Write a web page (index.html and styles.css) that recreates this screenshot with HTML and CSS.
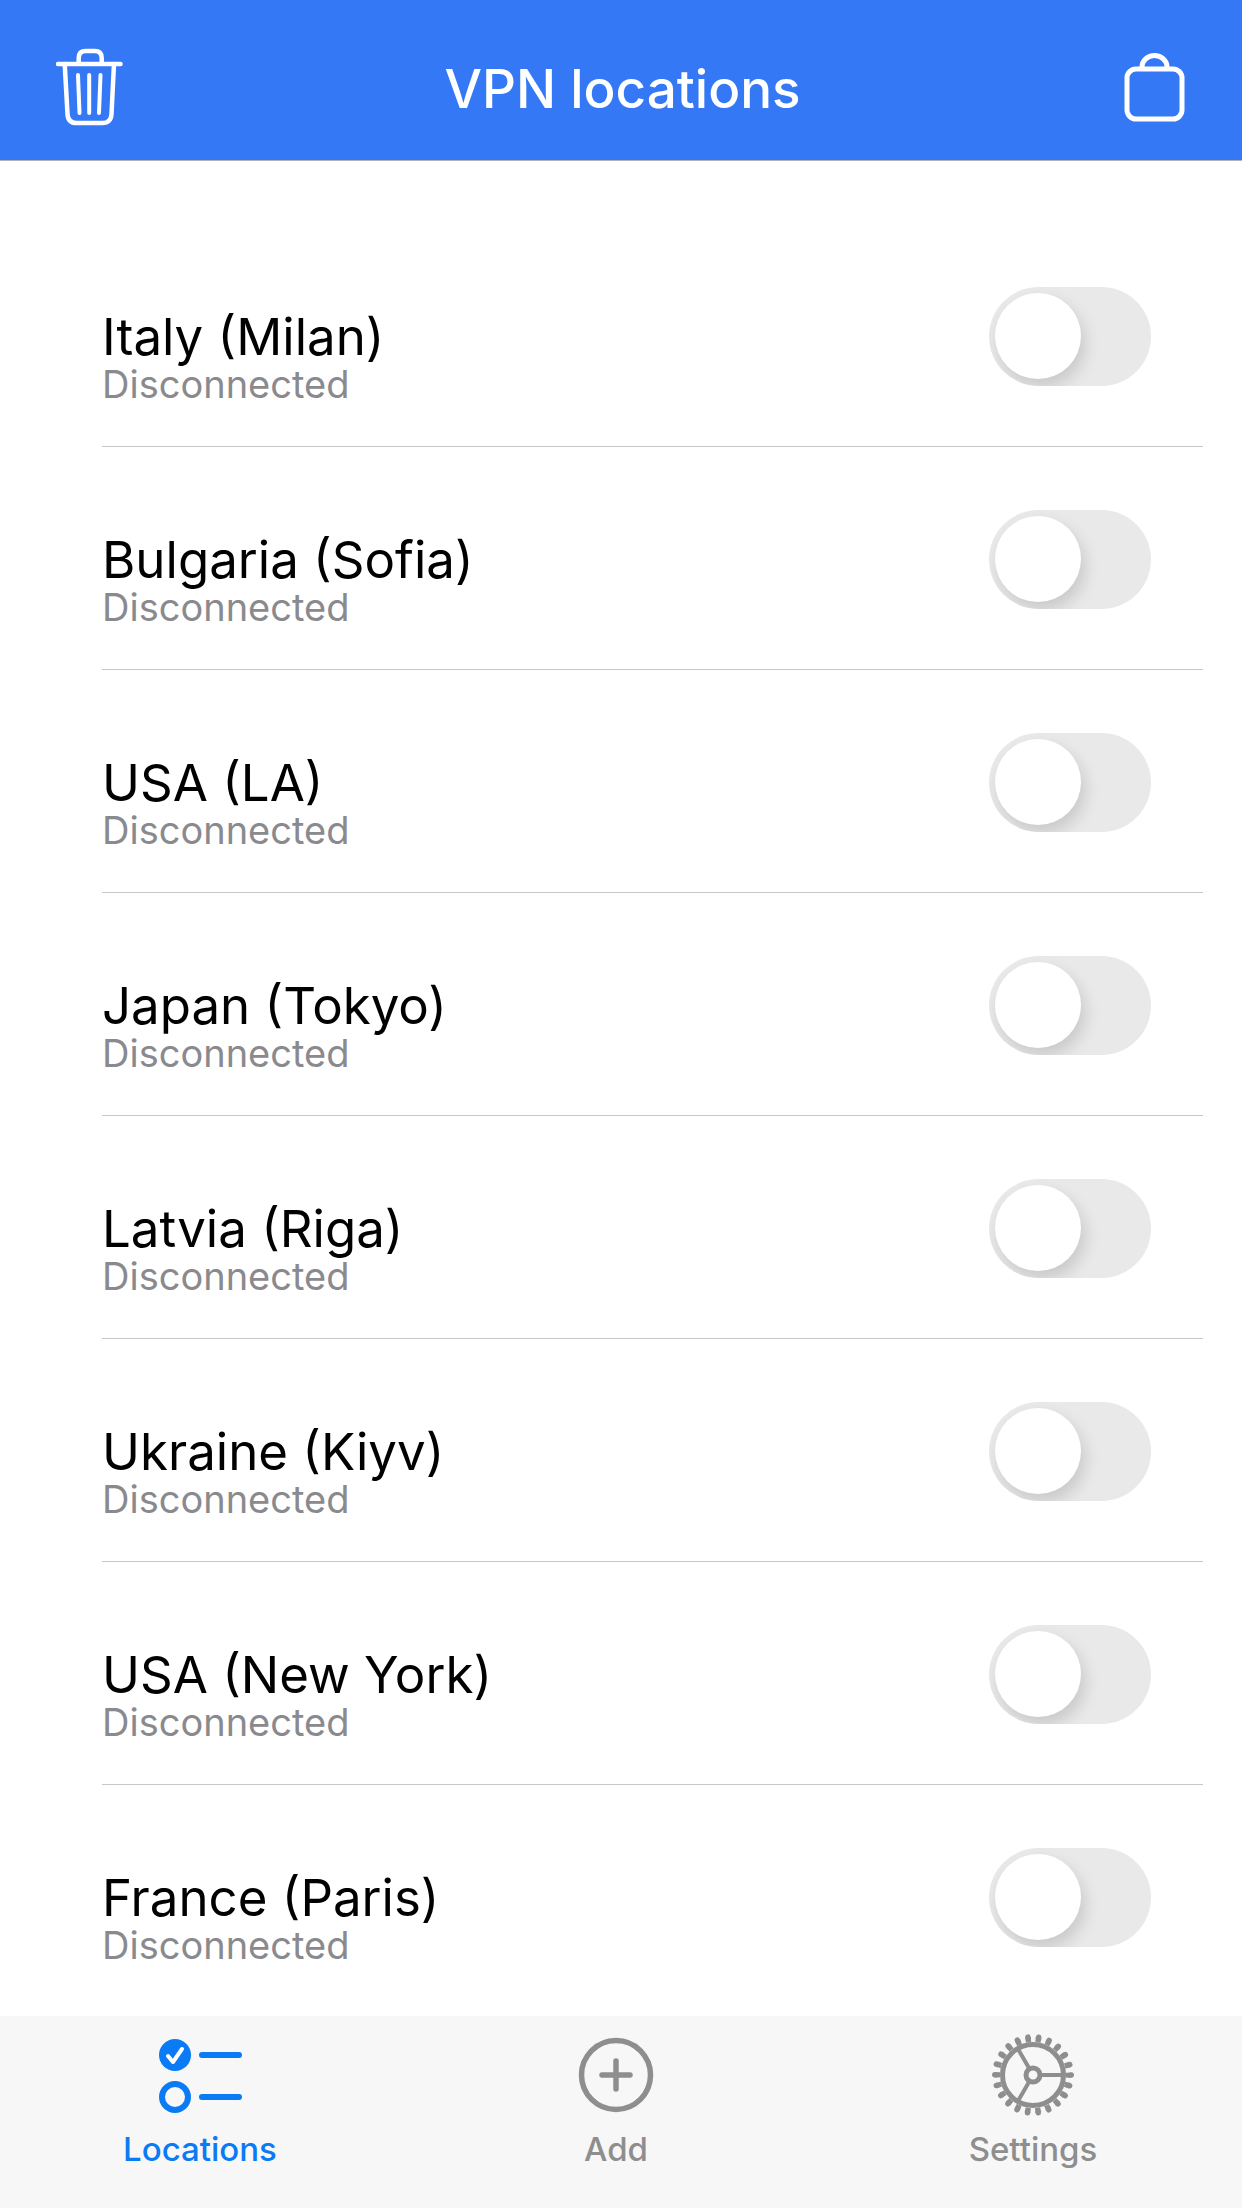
FILE: index.html
```html
<!DOCTYPE html>
<html lang="en">
<head>
  <meta charset="UTF-8">
  <title>VPN locations</title>
  <link rel="stylesheet" href="styles.css">
</head>
<body>
  <div class="app">

    <!-- Header -->
    <header class="header">
      <svg class="header-icon" width="67" height="78" viewBox="0 0 67 78" fill="none" stroke="#fff" stroke-width="4.500" stroke-linecap="round" stroke-linejoin="round">
        <path d="M2 16H64.500"/>
        <path d="M22.700 15V10Q22.700 3 29.700 3H38.700Q45.700 3 45.700 10V15"/>
        <path d="M8.700 16L11.500 66Q12 75 20.500 75H46.500Q55 75 55.500 66L58 16"/>
        <path d="M22 27L23.500 65M33.200 27V65M44.500 27L43 65" stroke-width="4"/>
      </svg>
      <h1 class="title">VPN locations</h1>
      <svg class="header-icon" width="62" height="72" viewBox="0 -2 62 72" fill="none" stroke="#fff" stroke-width="5">
        <rect x="3" y="16" width="55" height="50" rx="9"/>
        <path d="M18 16V14A12.500 11.500 0 0 1 43 14V16"/>
      </svg>
    </header>

    <!-- List -->
    <main class="list">
      <div class="row">
        <div class="row-text"><div class="name">Italy (Milan)</div><div class="status">Disconnected</div></div>
        <div class="toggle"><div class="knob"></div></div>
      </div>
      <div class="row">
        <div class="row-text"><div class="name">Bulgaria (Sofia)</div><div class="status">Disconnected</div></div>
        <div class="toggle"><div class="knob"></div></div>
      </div>
      <div class="row">
        <div class="row-text"><div class="name">USA (LA)</div><div class="status">Disconnected</div></div>
        <div class="toggle"><div class="knob"></div></div>
      </div>
      <div class="row">
        <div class="row-text"><div class="name">Japan (Tokyo)</div><div class="status">Disconnected</div></div>
        <div class="toggle"><div class="knob"></div></div>
      </div>
      <div class="row">
        <div class="row-text"><div class="name">Latvia (Riga)</div><div class="status">Disconnected</div></div>
        <div class="toggle"><div class="knob"></div></div>
      </div>
      <div class="row">
        <div class="row-text"><div class="name">Ukraine (Kiyv)</div><div class="status">Disconnected</div></div>
        <div class="toggle"><div class="knob"></div></div>
      </div>
      <div class="row">
        <div class="row-text"><div class="name">USA (New York)</div><div class="status">Disconnected</div></div>
        <div class="toggle"><div class="knob"></div></div>
      </div>
      <div class="row">
        <div class="row-text"><div class="name">France (Paris)</div><div class="status">Disconnected</div></div>
        <div class="toggle"><div class="knob"></div></div>
      </div>
    </main>

    <!-- Tab bar -->
    <nav class="tabbar">
      <div class="tab tab-active">
        <svg width="84" height="84" viewBox="0 0 84 84" fill="none">
          <circle cx="17" cy="19" r="16" fill="#0a7bf5"/>
          <path d="M10 20L15 26L24 13" stroke="#fff" stroke-width="4" stroke-linecap="round" stroke-linejoin="round"/>
          <circle cx="17" cy="61" r="13" stroke="#0a7bf5" stroke-width="6"/>
          <path d="M44 19H81M44 61H81" stroke="#0a7bf5" stroke-width="6" stroke-linecap="round"/>
        </svg>
        <span class="tab-label">Locations</span>
      </div>
      <div class="tab">
        <svg width="84" height="84" viewBox="0 0 84 84" fill="none" stroke="#8e8e8e">
          <circle cx="42" cy="39" r="34.500" stroke-width="5.500"/>
          <path d="M42 25V53M28 39H56" stroke-width="5.500" stroke-linecap="round"/>
        </svg>
        <span class="tab-label">Add</span>
      </div>
      <div class="tab">
        <svg width="84" height="84" viewBox="0 0 84 84" fill="none" stroke="#8e8e8e">
          <circle cx="42" cy="39" r="35.500" stroke-width="5" stroke-dasharray="5.500 4.639" stroke-dashoffset="2.750"/>
          <circle cx="42" cy="39" r="38.200" stroke-width="5.500" stroke-dasharray="0.010 10.900" stroke-linecap="round"/>
          <circle cx="42" cy="39" r="30.500" stroke-width="5"/>
          <circle cx="42" cy="39" r="7" stroke-width="5"/>
          <path d="M50 39H72M38 32L27 13M38 46L27 65" stroke-width="4"/>
        </svg>
        <span class="tab-label">Settings</span>
      </div>
    </nav>

  </div>
</body>
</html>
```

FILE: styles.css
```css
body {
  margin: 0;
  font-family: Inter, "Noto Sans", sans-serif;
  background: #fff;
}

.app {
  width: 1242px;
  height: 2208px;
  display: flex;
  flex-direction: column;
  overflow: hidden;
}

/* --- Header --- */
.header {
  height: 146px;
  flex-shrink: 0;
  background: #3478f6;
  border-bottom: 1px solid #b2b2b2;
  display: flex;
  align-items: center;
  justify-content: space-between;
  padding: 14px 56px 0;
}

.title {
  margin: 4px 2px 0 0;
  color: #fff;
  font-size: 53px;
  font-weight: 500;
}

/* --- List --- */
.list {
  flex: 1;
  padding-top: 63px;
  min-height: 0;
}

.row {
  height: 222px;
  margin: 0 39px 0 102px;
  padding-right: 52px;
  border-bottom: 1px solid #c8c8c8;
  display: flex;
  align-items: center;
  justify-content: space-between;
}

.row:last-child {
  border-bottom: none;
}

.row-text {
  margin-top: 43px;
}

.name {
  font-size: 51px;
  line-height: 56px;
  color: #000;
}

.status {
  font-size: 38px;
  line-height: 39px;
  color: #8a8a8e;
}

.toggle {
  width: 162px;
  height: 99px;
  margin-top: 2px;
  border-radius: 50px;
  background: #e9e9e9;
  display: flex;
  align-items: center;
  padding-left: 6px;
  box-sizing: border-box;
  overflow: hidden;
}

.knob {
  width: 86px;
  height: 86px;
  border-radius: 50%;
  background: #fff;
  box-shadow: 4px 8px 16px rgba(0, 0, 0, 0.14);
}

/* --- Tab bar --- */
.tabbar {
  height: 192px;
  flex-shrink: 0;
  background: #f7f7f7;
  display: grid;
  grid-template-columns: 400px 432px 402px;
}

.tab {
  display: flex;
  flex-direction: column;
  align-items: center;
  color: #8e8e8e;
}

.tab svg {
  margin-top: 20px;
  overflow: visible;
}

.tab-label {
  font-size: 33px;
  font-weight: 500;
  line-height: 36px;
  margin-top: 11px;
}

.tab-active {
  color: #0a7bf5;
}
```
